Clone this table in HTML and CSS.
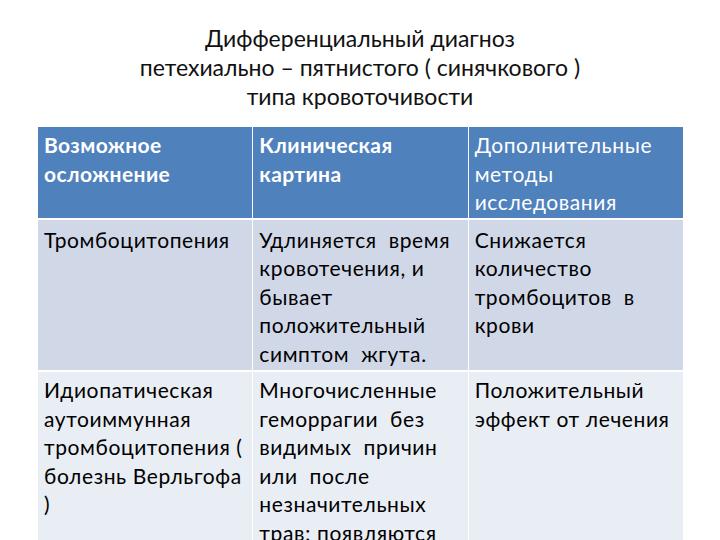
FILE: index.html
```html
<!DOCTYPE html>
<html lang="ru">
<head>
<meta charset="utf-8">
<link rel="stylesheet" href="styles.css">
</head>
<body>
<div class="slide">
  <h1 class="title">Дифференциальный диагноз<br>петехиально – пятнистого ( синячкового )<br>типа кровоточивости</h1>
  <table class="dd">
    <thead>
      <tr>
        <th class="b">Возможное<br>осложнение</th>
        <th class="b">Клиническая<br>картина</th>
        <th>Дополнительные<br>методы<br>исследования</th>
      </tr>
    </thead>
    <tbody>
      <tr class="odd">
        <td>Тромбоцитопения</td>
        <td>Удлиняется&nbsp; время<br>кровотечения, и<br>бывает<br>положительный<br>симптом&nbsp; жгута.</td>
        <td>Снижается<br>количество<br>тромбоцитов&nbsp; в<br>крови</td>
      </tr>
      <tr class="even">
        <td>Идиопатическая<br>аутоиммунная<br>тромбоцитопения (<br>болезнь Верльгофа<br>)</td>
        <td>Многочисленные<br>геморрагии&nbsp; без<br>видимых&nbsp; причин<br>или&nbsp; после<br>незначительных<br>трав; появляются</td>
        <td>Положительный<br>эффект от лечения</td>
      </tr>
    </tbody>
  </table>
</div>
</body>
</html>
```

FILE: styles.css
```css
html, body {
  margin: 0;
  padding: 0;
  background: #ffffff;
}

.slide {
  width: 720px;
  height: 540px;
  overflow: hidden;
  font-family: "Lato", "Liberation Sans", sans-serif;
  color: #000;
}

.title {
  margin: 0;
  padding-top: 24px;
  height: 127px;
  box-sizing: border-box;
  font-weight: 400;
  font-size: 23px;
  line-height: 29px;
  text-align: center;
  color: #111;
}

.dd {
  margin-left: 37px;
  width: 647px;
  border-collapse: collapse;
  table-layout: fixed;
  font-size: 21px;
  line-height: 28.5px;
  letter-spacing: 0.6px;
}

.dd th,
.dd td {
  width: 33.33%;
  text-align: left;
  vertical-align: top;
  padding: 4px 5px 1px 6px;
  border-left: 1px solid #ffffff;
  border-right: 1px solid #ffffff;
}

.dd th {
  background: #4f81bd;
  color: #ffffff;
  font-weight: 400;
  height: 85px;
  border-bottom: 2px solid #ffffff;
}

.dd th.b {
  font-weight: 700;
  letter-spacing: 0.4px;
}

.dd td {
  border-bottom: 2px solid #ffffff;
}

.odd td {
  background: #d0d8e8;
  padding-top: 6px;
  padding-bottom: 2px;
}

.even td {
  background: #e9edf4;
  padding-top: 4px;
}
```
